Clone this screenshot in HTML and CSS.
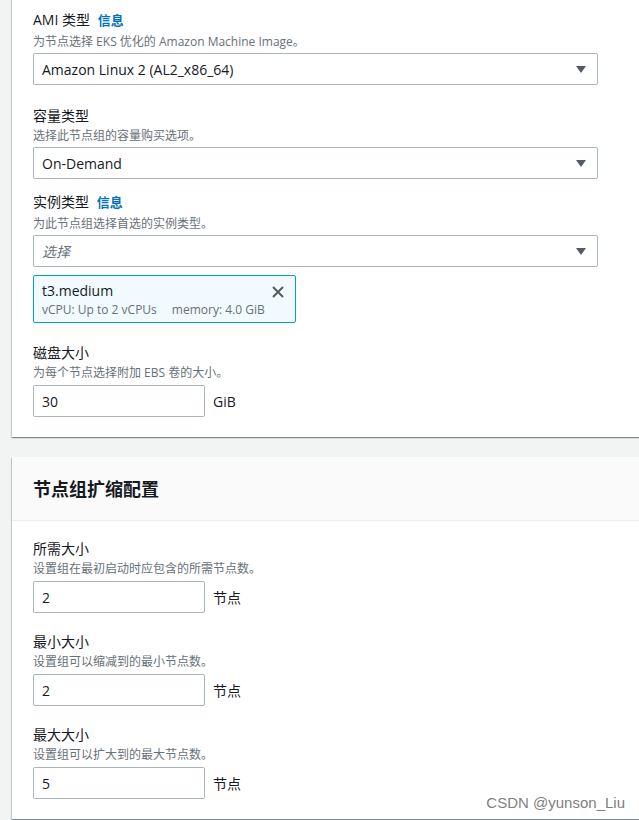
FILE: index.html
```html
<!DOCTYPE html>
<html lang="zh">
<head>
<meta charset="utf-8">
<title>节点组配置</title>
<link rel="stylesheet" href="styles.css">
</head>
<body>
<div class="page">
  <section class="card card-top">
    <div class="card-body">
      <div class="field field-ami">
        <div class="label has-info">AMI 类型 <a class="info">信息</a></div>
        <div class="desc">为节点选择 EKS 优化的 Amazon Machine Image。</div>
        <div class="select">
          <span class="value">Amazon Linux 2 (AL2_x86_64)</span>
          <svg class="caret" width="10" height="7" viewBox="0 0 10 7"><path d="M0 0H10L5 7Z" fill="#545b64"/></svg>
        </div>
      </div>
      <div class="field field-cap">
        <div class="label">容量类型</div>
        <div class="desc">选择此节点组的容量购买选项。</div>
        <div class="select">
          <span class="value">On-Demand</span>
          <svg class="caret" width="10" height="7" viewBox="0 0 10 7"><path d="M0 0H10L5 7Z" fill="#545b64"/></svg>
        </div>
      </div>
      <div class="field field-inst">
        <div class="label has-info">实例类型 <a class="info">信息</a></div>
        <div class="desc">为此节点组选择首选的实例类型。</div>
        <div class="select">
          <span class="placeholder">选择</span>
          <svg class="caret" width="10" height="7" viewBox="0 0 10 7"><path d="M0 0H10L5 7Z" fill="#545b64"/></svg>
        </div>
        <div class="token">
          <div class="token-text">
            <div class="token-title">t3.medium</div>
            <div class="token-tags"><span>vCPU: Up to 2 vCPUs</span><span>memory: 4.0 GiB</span></div>
          </div>
          <svg class="dismiss" width="14" height="14" viewBox="0 0 14 14"><path d="M2 2L12 12M12 2L2 12" stroke="#545b64" stroke-width="2" fill="none"/></svg>
        </div>
      </div>
      <div class="field field-disk">
        <div class="label">磁盘大小</div>
        <div class="desc">为每个节点选择附加 EBS 卷的大小。</div>
        <div class="input-row">
          <div class="input">30</div>
          <span class="unit">GiB</span>
        </div>
      </div>
    </div>
  </section>

  <section class="card card-bottom">
    <header class="card-header">
      <h2>节点组扩缩配置</h2>
    </header>
    <div class="card-body body2">
      <div class="field">
        <div class="label">所需大小</div>
        <div class="desc">设置组在最初启动时应包含的所需节点数。</div>
        <div class="input-row">
          <div class="input">2</div>
          <span class="unit">节点</span>
        </div>
      </div>
      <div class="field">
        <div class="label">最小大小</div>
        <div class="desc">设置组可以缩减到的最小节点数。</div>
        <div class="input-row">
          <div class="input">2</div>
          <span class="unit">节点</span>
        </div>
      </div>
      <div class="field">
        <div class="label">最大大小</div>
        <div class="desc">设置组可以扩大到的最大节点数。</div>
        <div class="input-row">
          <div class="input">5</div>
          <span class="unit">节点</span>
        </div>
      </div>
    </div>
  </section>
  <div class="watermark">CSDN @yunson_Liu</div>
</div>
</body>
</html>
```

FILE: styles.css
```css
html, body {
  margin: 0;
  padding: 0;
  overflow: hidden;
}
body {
  background: #f2f3f3;
  font-family: "Open Sans", "Noto Sans CJK SC", sans-serif;
  color: #16191f;
  font-size: 14px;
}
.page {
  position: relative;
  height: 820px;
  overflow: hidden;
  background: #f2f3f3;
}
.card {
  background: #ffffff;
  margin-left: 12px;
  margin-right: -40px;
  box-shadow: 0 1px 1px 0 rgba(0, 28, 36, 0.3), 1px 1px 1px 0 rgba(0, 28, 36, 0.15), -1px 1px 1px 0 rgba(0, 28, 36, 0.15);
}
.card-top {
  margin-top: -20px;
  padding-top: 20px;
}
.card-body {
  padding: 9px 0 20px 21px;
}
.field {
  display: flex;
  flex-direction: column;
}
.label {
  font-size: 14px;
  line-height: 22px;
  color: #16191f;
}
.label.has-info {
  margin-bottom: 2px;
}
.info {
  color: #0073bb;
  font-weight: 700;
  font-size: 13px;
  margin-left: 4px;
}
.desc {
  font-size: 12px;
  line-height: 16px;
  color: #687078;
  margin-top: 1px;
}
.select {
  margin-top: 3px;
  width: 565px;
  height: 32px;
  box-sizing: border-box;
  border: 1px solid #aab7b8;
  border-radius: 2px;
  display: flex;
  align-items: center;
  justify-content: space-between;
  padding: 0 11px 0 8px;
}
.select .value {
  font-size: 14px;
  color: #16191f;
}
.placeholder {
  font-size: 14px;
  color: #687078;
  font-style: italic;
}
.caret {
  display: block;
}
.field-cap {
  margin-top: 20px;
}
.field-inst {
  margin-top: 12px;
}
.field-disk {
  margin-top: 19px;
}
.token {
  margin-top: 8px;
  width: 263px;
  height: 48px;
  box-sizing: border-box;
  border: 1px solid #00a1c9;
  border-radius: 2px;
  background: #f1faff;
  display: flex;
  justify-content: space-between;
  align-items: flex-start;
  padding: 5px 10px 0 8px;
}
.token-title {
  font-size: 14px;
  line-height: 20px;
  color: #16191f;
}
.token-tags {
  font-size: 12px;
  line-height: 16px;
  color: #687078;
  display: flex;
  gap: 15px;
  margin-top: 1px;
}
.dismiss {
  margin-top: 4px;
}
.input-row {
  margin-top: 4px;
  display: flex;
  align-items: center;
  gap: 8px;
}
.input {
  width: 172px;
  height: 32px;
  box-sizing: border-box;
  border: 1px solid #aab7b8;
  border-radius: 2px;
  padding: 0 8px;
  display: flex;
  align-items: center;
  font-size: 14px;
  color: #16191f;
}
.unit {
  font-size: 14px;
  color: #16191f;
}
.card-bottom {
  margin-top: 20px;
}
.card-header {
  background: #fafafa;
  border-bottom: 1px solid #eaeded;
  height: 64px;
  box-sizing: border-box;
  display: flex;
  align-items: center;
  padding-left: 21px;
}
.card-header h2 {
  margin: 0;
  font-size: 18px;
  font-weight: 700;
  color: #16191f;
  line-height: 22px;
}
.body2 {
  padding-top: 17px;
}
.body2 .field + .field {
  margin-top: 18px;
}
.watermark {
  position: absolute;
  right: 14px;
  bottom: 9px;
  font-family: "Liberation Sans", Arial, sans-serif;
  font-size: 15px;
  color: rgba(110, 110, 110, 0.9);
}
```
